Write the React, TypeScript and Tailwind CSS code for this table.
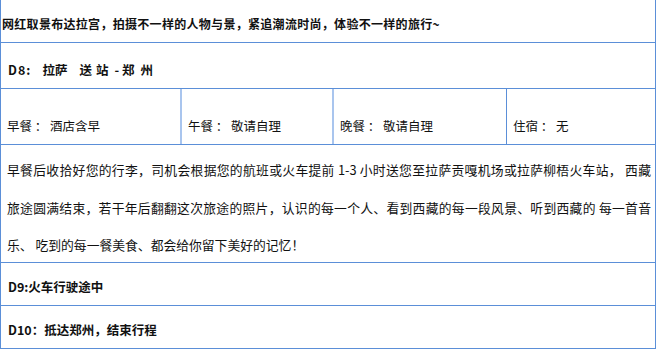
const line = "border-[#5b8fd8]";

function Row({ h, pt, bold, children }: { h: string; pt: string; bold?: boolean; children: React.ReactNode }) {
  return (
    <div className={`flex items-center border-b ${line} ${h} ${pt} ${bold ? "font-bold" : ""}`}>
      {children}
    </div>
  );
}

const meals = [
  { label: "早餐 ： 酒店含早", cls: "w-[181px] border-r-2 border-[#a9c5ee]" },
  { label: "午餐 ： 敬请自理", cls: "w-[152px] border-r-2 border-[#a9c5ee]" },
  { label: "晚餐 ： 敬请自理", cls: "w-[173px] border-r border-[#5b8fd8]" },
  { label: "住宿 ： 无", cls: "flex-1" },
];

export default function App() {
  return (
    <div className="w-[658px] h-[350px] bg-white overflow-hidden font-['Noto_Sans_CJK_SC','Noto_Sans',sans-serif] text-[#111]">
      <div className={`w-[656px] border-l border-r ${line}`}>
        <Row h="h-[43px]" pt="pt-[6px]" bold>
          <span className="pl-px text-[12px] tracking-[0.3px]">
            网红取景布达拉宫，拍摄不一样的人物与景，紧追潮流时尚，体验不一样的旅行~
          </span>
        </Row>

        {/* day title with wide gaps between the place names */}
        <Row h="h-[46px]" pt="pt-[10px]" bold>
          <div className="flex pl-[7px] text-[12.5px]">
            <span className="tracking-[1px]">D8:</span>
            <span className="ml-[11px]">拉萨</span>
            <span className="ml-[12px]">送</span>
            <span className="ml-[4px]">站</span>
            <span className="ml-[6px]">-</span>
            <span className="ml-[3px]">郑</span>
            <span className="ml-[6px]">州</span>
          </div>
        </Row>

        <div className={`flex h-[56px] border-b ${line} text-[12.5px]`}>
          {meals.map((m) => (
            <div key={m.label} className={`flex items-center pt-[20px] pl-[6px] whitespace-pre ${m.cls}`}>
              {m.label}
            </div>
          ))}
        </div>

        <div className={`h-[118px] border-b ${line} pl-[6px] pr-[4px] pt-[6px] text-[12.8px] leading-[37.5px]`}>
          <p className="text-justify [text-align-last:justify] whitespace-nowrap">
            早餐后收拾好您的行李，司机会根据您的航班或火车提前 1-3 小时送您至拉萨贡嘎机场或拉萨柳梧火车站， 西藏
          </p>
          <p className="text-justify [text-align-last:justify] whitespace-nowrap">
            旅途圆满结束，若干年后翻翻这次旅途的照片，认识的每一个人、看到西藏的每一段风景、听到西藏的 每一首音
          </p>
          <p>乐、 吃到的每一餐美食、都会给你留下美好的记忆！</p>
        </div>

        <Row h="h-[43px]" pt="pt-[7px]" bold>
          <span className="pl-[7px] text-[12.5px]">D9:火车行驶途中</span>
        </Row>

        <Row h="h-[43px]" pt="pt-[7px]" bold>
          <span className="pl-[7px] text-[12.5px]">D10：抵达郑州，结束行程</span>
        </Row>
      </div>
    </div>
  );
}
